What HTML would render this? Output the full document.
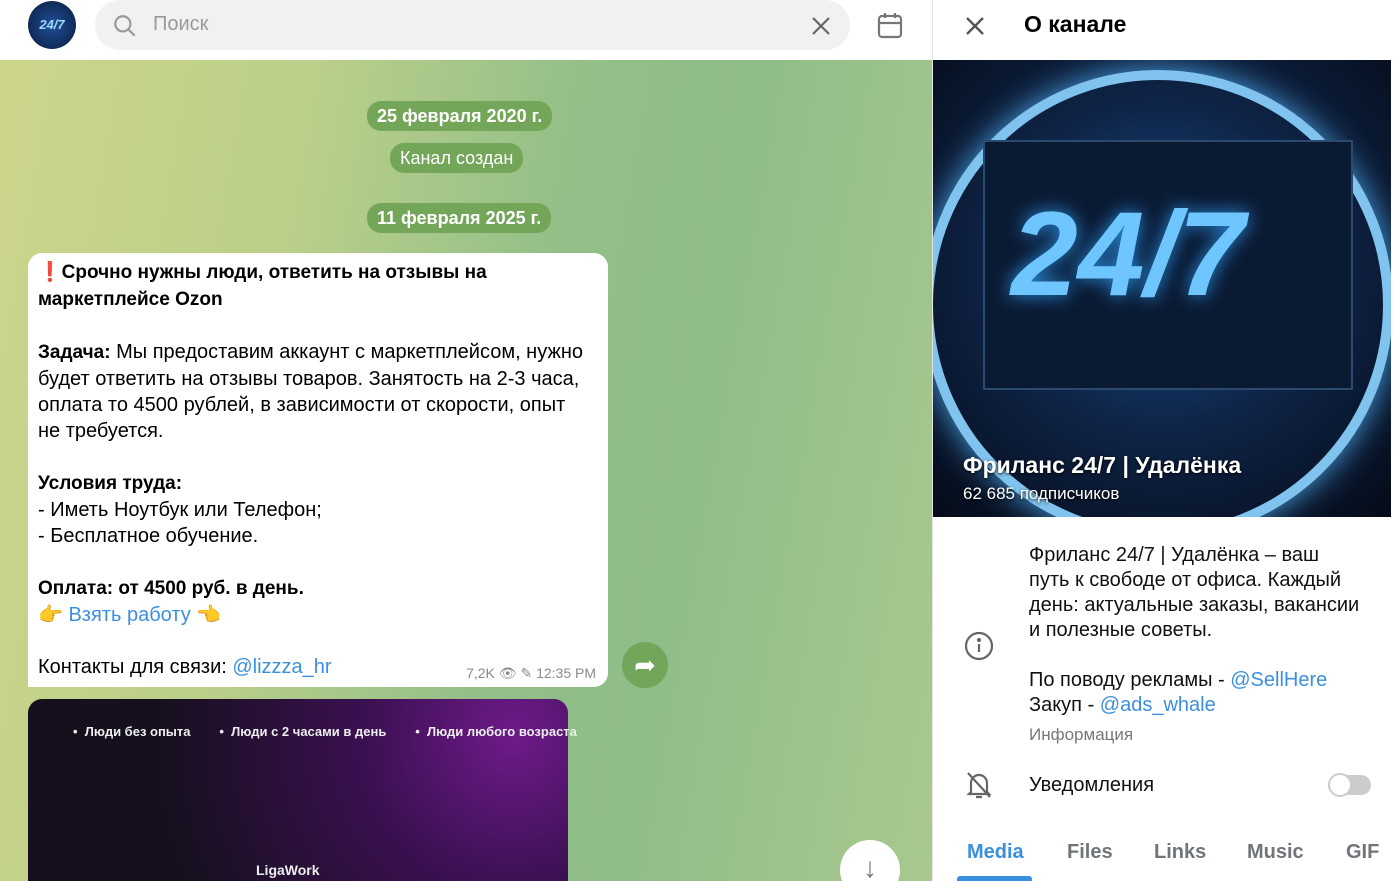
<!DOCTYPE html>
<html><head><meta charset="utf-8"><style>
*{margin:0;padding:0;box-sizing:border-box}
html,body{width:1400px;height:881px;overflow:hidden}
body{font-family:"Liberation Sans","Noto Sans CJK SC",sans-serif;background:#fff;position:relative}
.left{position:absolute;left:0;top:0;width:932px;height:881px;overflow:hidden}
.top{position:absolute;left:0;top:0;width:932px;height:60px;background:#fff}
.chat{position:absolute;left:0;top:60px;width:932px;height:821px;overflow:hidden;background:linear-gradient(100deg,#cdd58a 0%,#b9cf8a 30%,#93bf88 55%,#8fbd88 70%,#a9c98e 100%)}
.pill{position:absolute;background:#74a65a;color:#fff;border-radius:14px;font-size:18px;height:30px;line-height:30px;padding:0 10px;font-weight:bold}
.bubble{position:absolute;left:28px;top:253px;width:580px;height:434px;background:#fff;border-radius:14px 14px 14px 0;padding:6px 20px 6px 10px;font-size:20px;line-height:26px;color:#000}
.bubble b{font-size:19px}
.a{color:#3b8fe0}
.right{position:absolute;left:932px;top:0;width:458px;height:881px;background:#fff;border-left:1px solid #e4e4e4}
.rt{font-size:23px;font-weight:bold;position:absolute;left:91px;top:11px}
.img{position:absolute;left:0;top:60px;width:458px;height:457px;background:radial-gradient(circle at 50% 45%,#1b4a86 0%,#0e2345 50%,#050b18 100%);overflow:hidden}
.desc{position:absolute;left:96px;font-size:20px;line-height:25px;color:#111}
.tabs span{position:absolute;top:841px;font-size:20px;font-weight:bold;color:#707579}
</style></head><body>
<div class="left">
<div class="chat">
<div class="pill" style="left:367px;top:41px">25 февраля 2020 г.</div>
<div class="pill" style="left:390px;top:83px;font-weight:normal">Канал создан</div>
<div class="pill" style="left:367px;top:143px">11 февраля 2025 г.</div>
<div style="position:absolute;left:622px;top:582px;width:46px;height:46px;border-radius:50%;background:#72a65b;color:#fff;font-size:26px;text-align:center;line-height:46px">➦</div>
<div style="position:absolute;left:28px;top:639px;width:540px;height:190px;border-radius:14px 14px 0 0;background:radial-gradient(circle at 90% 20%,#6e1a8a 0%,#3a1050 30%,#16101e 70%)">
<div style="position:absolute;top:25px;left:45px;color:#eee;font-size:13px;font-weight:bold;white-space:pre">•  Люди без опыта        •  Люди с 2 часами в день        •  Люди любого возраста</div>
<div style="position:absolute;top:163px;left:228px;color:#eee;font-size:14px;font-weight:bold">LigaWork</div></div>
<div style="position:absolute;left:840px;top:780px;width:60px;height:60px;border-radius:50%;background:#fff;text-align:center;line-height:56px;font-size:28px;color:#777">↓</div>
</div>
<div class="bubble"><b><span style="color:#d00">❗</span>Срочно нужны люди, ответить на отзывы на маркетплейсе Ozon</b><br><br><b>Задача:</b> Мы предоставим аккаунт с маркетплейсом, нужно будет ответить на отзывы товаров. Занятость на 2-3 часа, оплата то 4500 рублей, в зависимости от скорости, опыт не требуется.<br><br><b>Условия труда:</b><br>- Иметь Ноутбук или Телефон;<br>- Бесплатное обучение.<br><br><b>Оплата: от 4500 руб. в день.</b><br>👉 <span class="a">Взять работу</span> 👈<br><br>Контакты для связи: <span class="a">@lizzza_hr</span>
<span style="position:absolute;right:12px;bottom:6px;font-size:14px;line-height:16px;color:#8a8a8a">7,2K 👁 ✎ 12:35 PM</span></div>
<div class="top">
<div style="position:absolute;left:28px;top:1px;width:48px;height:48px;border-radius:50%;background:radial-gradient(#1e4f9a,#0a1a3a);color:#9fd8ff;font-size:13px;font-weight:bold;text-align:center;line-height:48px;font-style:italic">24/7</div>
<div style="position:absolute;left:95px;top:0;width:755px;height:50px;border-radius:25px;background:#f1f1f1"></div>
<svg style="position:absolute;left:112px;top:13px" width="26" height="26" viewBox="0 0 24 24" fill="none" stroke="#999" stroke-width="2"><circle cx="10" cy="10" r="7"/><path d="M15 15l6 6"/></svg>
<div style="position:absolute;left:153px;top:13px;font-size:20px;color:#9a9a9a">Поиск</div>
<svg style="position:absolute;left:810px;top:15px" width="22" height="22" viewBox="0 0 22 22" stroke="#666" stroke-width="2.2"><path d="M3 3l16 16M19 3L3 19"/></svg>
<svg style="position:absolute;left:876px;top:11px" width="28" height="28" viewBox="0 0 28 28" fill="none" stroke="#777" stroke-width="2.2"><rect x="3" y="5" width="22" height="21" rx="3"/><path d="M3 12h22M9 2v5M19 2v5"/></svg>
</div>
</div>
<div class="right">
<svg style="position:absolute;left:32px;top:16px" width="20" height="20" viewBox="0 0 20 20" stroke="#555" stroke-width="2.4"><path d="M2 2l16 16M18 2L2 18"/></svg>
<div class="rt">О канале</div>
<div class="img">
<div style="position:absolute;left:-10px;top:10px;width:470px;height:470px;border-radius:50%;border:10px solid #7fc3ee;box-shadow:0 0 30px #4aa0e0"></div>
<div style="position:absolute;left:50px;top:80px;width:370px;height:250px;background:#0b1a33;border:2px solid #2a4a70"></div>
<div style="position:absolute;left:78px;top:125px;font-size:120px;font-weight:bold;font-style:italic;color:#6fc6ff;text-shadow:0 0 18px #2a8fe0">24/7</div>
<div style="position:absolute;left:30px;top:392px;color:#fff;font-size:23px;font-weight:bold;text-shadow:0 1px 3px #000">Фриланс 24/7 | Удалёнка</div>
<div style="position:absolute;left:30px;top:424px;color:#fff;font-size:17px;text-shadow:0 1px 3px #000">62 685 подписчиков</div>
</div>
<div class="desc" style="top:543px">Фриланс 24/7 | Удалёнка – ваш<br>путь к свободе от офиса. Каждый<br>день: актуальные заказы, вакансии<br>и полезные советы.<br><br>По поводу рекламы - <span class="a">@SellHere</span><br>Закуп - <span class="a">@ads_whale</span></div>
<div class="desc" style="top:722px;font-size:17px;color:#777">Информация</div>
<svg style="position:absolute;left:31px;top:631px" width="30" height="30" viewBox="0 0 30 30" fill="none" stroke="#666" stroke-width="2.2"><circle cx="15" cy="15" r="13"/><path d="M15 13v8"/><circle cx="15" cy="9" r="1" fill="#666"/></svg>
<svg style="position:absolute;left:32px;top:770px" width="28" height="30" viewBox="0 0 28 30" fill="none" stroke="#666" stroke-width="2.2"><path d="M6 22V13a8 8 0 0116 0v9l2 2H4zM11 27h6M3 3l22 24"/></svg>
<div class="desc" style="top:773px">Уведомления</div>
<div style="position:absolute;left:396px;top:775px;width:42px;height:20px;border-radius:10px;background:#ccc"></div>
<div style="position:absolute;left:395px;top:773px;width:24px;height:24px;border-radius:50%;background:#fff;border:2px solid #ccc"></div>
<div class="tabs"><span style="left:34px;color:#3a8fe0">Media</span><span style="left:134px">Files</span><span style="left:221px">Links</span><span style="left:314px">Music</span><span style="left:413px">GIF</span></div>
<div style="position:absolute;left:24px;top:876px;width:75px;height:5px;border-radius:3px 3px 0 0;background:#3a8fe0"></div>
</div>
</body></html>
